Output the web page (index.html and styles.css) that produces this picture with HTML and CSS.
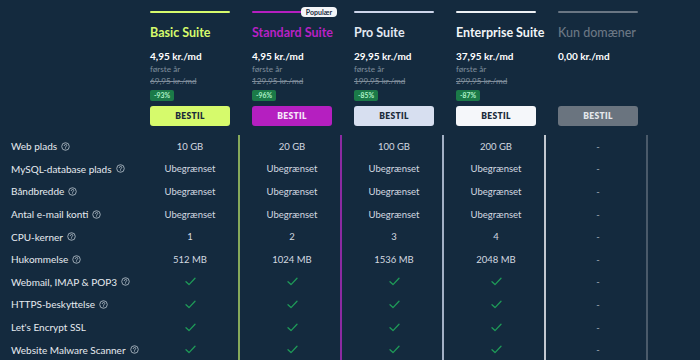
FILE: index.html
```html
<!DOCTYPE html>
<html lang="da">
<head>
<meta charset="utf-8">
<title>Webhotel priser</title>
<link rel="stylesheet" href="styles.css">
</head>
<body>
<div class="pricing">
  <div class="head">
    <div class="head-label"></div>
    <div class="plan plan-basic">
      <div class="bar"></div>
      <div class="name">Basic Suite</div>
      <div class="price">4,95 kr./md</div>
      <div class="details">
        <div class="first">første år</div>
        <div class="old">69,95 kr./md</div>
        <span class="save">-93%</span>
      </div>
      <button class="btn">BESTIL</button>
    </div>
    <div class="plan plan-standard">
      <div class="bar"><span class="popular">Populær</span></div>
      <div class="name">Standard Suite</div>
      <div class="price">4,95 kr./md</div>
      <div class="details">
        <div class="first">første år</div>
        <div class="old">129,95 kr./md</div>
        <span class="save">-96%</span>
      </div>
      <button class="btn">BESTIL</button>
    </div>
    <div class="plan plan-pro">
      <div class="bar"></div>
      <div class="name">Pro Suite</div>
      <div class="price">29,95 kr./md</div>
      <div class="details">
        <div class="first">første år</div>
        <div class="old">199,95 kr./md</div>
        <span class="save">-85%</span>
      </div>
      <button class="btn">BESTIL</button>
    </div>
    <div class="plan plan-enterprise">
      <div class="bar"></div>
      <div class="name">Enterprise Suite</div>
      <div class="price">37,95 kr./md</div>
      <div class="details">
        <div class="first">første år</div>
        <div class="old">299,95 kr./md</div>
        <span class="save">-87%</span>
      </div>
      <button class="btn">BESTIL</button>
    </div>
    <div class="plan plan-domain">
      <div class="bar"></div>
      <div class="name">Kun domæner</div>
      <div class="price">0,00 kr./md</div>
      <div class="details"></div>
      <button class="btn">BESTIL</button>
    </div>
  </div>

  <div class="body" id="rows"></div>
</div>

<template id="help-tpl"><svg class="help" viewBox="0 0 10 10" width="9" height="9"><circle cx="5" cy="5" r="4.2" fill="none" stroke="currentColor" stroke-width="0.9"/><path d="M3.6 3.9 C3.6 2.2 6.4 2.2 6.4 3.8 C6.4 4.9 5 4.9 5 6" fill="none" stroke="currentColor" stroke-width="0.9" stroke-linecap="round"/><circle cx="5" cy="7.4" r="0.55" fill="currentColor"/></svg></template>
<template id="check-tpl"><svg class="check" viewBox="0 0 11 9" width="11" height="9"><path d="M1 4.8 L4 7.6 L10 1.2" fill="none" stroke="currentColor" stroke-width="1.3" stroke-linecap="round" stroke-linejoin="round"/></svg></template>

<script src="app.js"></script>
</body>
</html>
```

FILE: app.js
```js
const rows = [
  ["Web plads", true, ["10 GB", "20 GB", "100 GB", "200 GB", "-"]],
  ["MySQL-database plads", true, ["Ubegrænset", "Ubegrænset", "Ubegrænset", "Ubegrænset", "-"]],
  ["Båndbredde", true, ["Ubegrænset", "Ubegrænset", "Ubegrænset", "Ubegrænset", "-"]],
  ["Antal e-mail konti", true, ["Ubegrænset", "Ubegrænset", "Ubegrænset", "Ubegrænset", "-"]],
  ["CPU-kerner", true, ["1", "2", "3", "4", "-"]],
  ["Hukommelse", true, ["512 MB", "1024 MB", "1536 MB", "2048 MB", "-"]],
  ["Webmail, IMAP & POP3", true, ["✓", "✓", "✓", "✓", "-"]],
  ["HTTPS-beskyttelse", true, ["✓", "✓", "✓", "✓", "-"]],
  ["Let's Encrypt SSL", false, ["✓", "✓", "✓", "✓", "-"]],
  ["Website Malware Scanner", true, ["✓", "✓", "✓", "✓", "-"]]
];
const plans = ["basic", "standard", "pro", "enterprise", "domain"];
const root = document.getElementById("rows");
const helpTpl = document.getElementById("help-tpl");
const checkTpl = document.getElementById("check-tpl");
rows.forEach(([label, help, vals]) => {
  const row = document.createElement("div");
  row.className = "row";
  const l = document.createElement("div");
  l.className = "label";
  const t = document.createElement("span");
  t.textContent = label;
  l.appendChild(t);
  if (help) l.appendChild(helpTpl.content.cloneNode(true));
  row.appendChild(l);
  vals.forEach((v, i) => {
    const c = document.createElement("div");
    c.className = "cell cell-" + plans[i];
    if (v === "✓") c.appendChild(checkTpl.content.cloneNode(true));
    else if (v === "-") { c.classList.add("dash"); c.textContent = "-"; }
    else c.textContent = v;
    row.appendChild(c);
  });
  root.appendChild(row);
});
```

FILE: styles.css
```css
* { box-sizing: border-box; }
html, body {
  margin: 0;
  background: #142a3e;
}
body {
  font-family: Lato, "Liberation Sans", sans-serif;
  color: #e9eef3;
  width: 700px;
  height: 360px;
  overflow: hidden;
}
.pricing { width: 700px; }

.head {
  display: grid;
  grid-template-columns: 138px repeat(5, 102px);
  margin-bottom: 9px;
}
.plan {
  display: flex;
  flex-direction: column;
  align-items: flex-start;
  padding: 11px 10px 0 12px;
}
.bar {
  position: relative;
  width: 80px;
  height: 2px;
  border-radius: 1px;
}
.popular {
  position: absolute;
  right: -5px;
  top: -4px;
  height: 10px;
  padding: 0 5px;
  border-radius: 4px;
  background: #f3f5f8;
  color: #1a2c3e;
  font-size: 7px;
  font-weight: 700;
  line-height: 10px;
  white-space: nowrap;
}
.name {
  margin-top: 13px;
  font-size: 12.5px;
  font-weight: 700;
  line-height: 14px;
  white-space: nowrap;
}
.price {
  margin-top: 9px;
  font-size: 10px;
  font-weight: 700;
  line-height: 14px;
  color: #ffffff;
}
.details {
  height: 37px;
  margin-top: 1px;
  display: flex;
  flex-direction: column;
  align-items: flex-start;
}
.first, .old {
  font-size: 8.2px;
  line-height: 11.5px;
  color: #7f8d9b;
}
.old { text-decoration: line-through; }
.save {
  margin-top: 2.5px;
  height: 11px;
  padding: 0 4px;
  border-radius: 2px;
  background: #1b7a48;
  color: #b0f2ca;
  font-size: 6.8px;
  font-weight: 700;
  line-height: 11px;
}
.btn {
  margin-top: 5px;
  width: 80px;
  height: 20px;
  border: 0;
  border-radius: 3px;
  font-family: inherit;
  font-size: 8.5px;
  font-weight: 800;
  letter-spacing: 0.3px;
  padding: 0;
}

.plan-basic .bar, .plan-basic .btn { background: #d6fa6c; }
.plan-basic .name { color: #d6fa6c; }
.plan-basic .btn { color: #1b2b3b; }

.plan-standard .bar, .plan-standard .btn { background: #b51fc0; }
.plan-standard .name { color: #b821c4; }
.plan-standard .btn { color: #f7e8fa; }

.plan-pro .bar { background: #cdd5ea; }
.plan-pro .btn { background: #d7dff0; color: #1b2b3b; }
.plan-pro .name { color: #e2e8f2; }

.plan-enterprise .bar { background: #eef1f5; }
.plan-enterprise .btn { background: #f5f7fa; color: #1b2b3b; }
.plan-enterprise .name { color: #f1f4f7; }

.plan-domain .bar { background: #6a7683; }
.plan-domain .btn { background: #6a747f; color: #e4e8ec; }
.plan-domain .name { color: #6b7784; font-weight: 500; }

.row {
  display: grid;
  grid-template-columns: 138px repeat(5, 102px);
  height: 22.6px;
}
.label {
  display: flex;
  align-items: center;
  gap: 4px;
  padding-left: 11px;
  font-size: 10px;
  color: #e6ebf0;
  white-space: nowrap;
}
.help { color: #b9c3cd; flex: none; }
.cell {
  display: flex;
  align-items: center;
  justify-content: center;
  padding: 0 8px 0 12px;
  font-size: 9.5px;
  color: #d3d9e0;
  border-right: 2px solid;
}
.cell.dash { color: #a3aeb9; }
.check { color: #1f9a58; }
.cell-basic { border-color: #86a95b; }
.cell-standard { border-color: #8c2aa2; }
.cell-pro { border-color: #a3b0c5; }
.cell-enterprise { border-color: #c2c8d0; }
.cell-domain { border-color: #4a5a6a; }
```
